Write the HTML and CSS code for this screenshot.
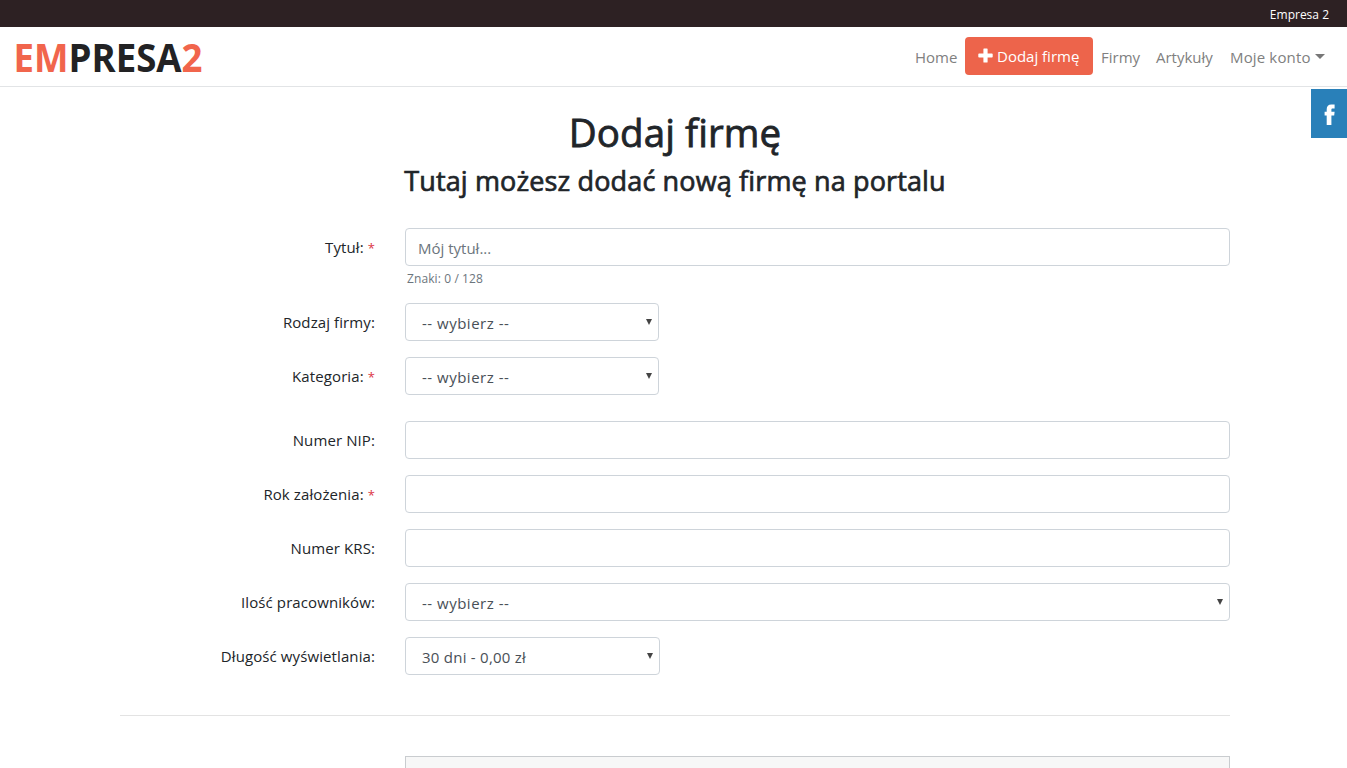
FILE: index.html
```html
<!DOCTYPE html>
<html lang="pl">
<head>
<meta charset="utf-8">
<title>Dodaj firmę - Empresa 2</title>
<link rel="stylesheet" href="styles.css">
</head>
<body>
<div class="topbar"><span class="topbar-name">Empresa 2</span></div>
<header class="navbar">
  <a class="brand" href="#">
    <svg width="210" height="59" viewBox="0 0 210 59">
      <text class="brand-text" x="13.500" y="45" textLength="189" lengthAdjust="spacingAndGlyphs"><tspan class="brand-accent">EM</tspan><tspan class="brand-dark">PRESA</tspan><tspan class="brand-accent">2</tspan></text>
    </svg>
  </a>
  <nav class="nav">
    <a class="nav-link nav-home" href="#">Home</a>
    <a class="btn-add" href="#">
      <svg class="plus" width="15" height="15" viewBox="0 0 15 15"><path d="M6 0.5h3q.6 0 .6.6v4.4h4.3q.8 0 .8.7v2.6q0 .7-.8.7H9.600v4.400q0 .6-.6.6H6q-.6 0-.6-.6V9.500H1.100q-.8 0-.8-.7V6.200q0-.7.8-.7h4.300V1.100q0-.6.6-.6z" fill="#fff"/></svg>
      <span>Dodaj firmę</span>
    </a>
    <a class="nav-link nav-firmy" href="#">Firmy</a>
    <a class="nav-link nav-art" href="#">Artykuły</a>
    <a class="nav-link nav-konto" href="#"><span>Moje konto</span><i class="caret"></i></a>
  </nav>
</header>
<a class="facebook" href="#"><svg width="12" height="22" viewBox="0 0 12 22"><path d="M2.700 21V11.600H.6V7.800h2.100V5.300C2.700 2.200 4.400.5 7.300.5h3.300v3.900H8.800C7.700 4.400 7.400 4.800 7.400 5.800v2h3.200l-.4 3.800H7.400V21z" fill="#fff"/></svg></a>
<main class="container">
  <h1 class="title">Dodaj firmę</h1>
  <h2 class="subtitle">Tutaj możesz dodać nową firmę na portalu</h2>
  <form class="form">
    <div class="row row-title">
      <label class="label">Tytuł: <b class="req">*</b></label>
      <div class="field"><input class="control" placeholder="Mój tytuł..."><small class="hint">Znaki: 0 / 128</small></div>
    </div>
    <div class="row">
      <label class="label">Rodzaj firmy:</label>
      <div class="select w254"><select class="control s-choose"><option>-- wybierz --</option></select></div>
    </div>
    <div class="row row-category">
      <label class="label">Kategoria: <b class="req">*</b></label>
      <div class="select w254"><select class="control s-choose"><option>-- wybierz --</option></select></div>
    </div>
    <div class="row">
      <label class="label">Numer NIP:</label>
      <div class="field"><input class="control"></div>
    </div>
    <div class="row">
      <label class="label">Rok założenia: <b class="req">*</b></label>
      <div class="field"><input class="control"></div>
    </div>
    <div class="row">
      <label class="label">Numer KRS:</label>
      <div class="field"><input class="control"></div>
    </div>
    <div class="row">
      <label class="label">Ilość pracowników:</label>
      <div class="select"><select class="control s-choose"><option>-- wybierz --</option></select></div>
    </div>
    <div class="row">
      <label class="label">Długość wyświetlania:</label>
      <div class="select w255"><select class="control s-days"><option>30 dni - 0,00 zł</option></select></div>
    </div>
    <hr class="divider">
    <div class="editor"></div>
  </form>
</main>
</body>
</html>
```
FILE: styles.css
```css
* { box-sizing: border-box; }
body {
  margin: 0;
  background: #fff;
  color: #212529;
  font: 15px/24px "Open Sans", "Noto Sans", sans-serif;
}
a { text-decoration: none; color: inherit; }
.topbar {
  height: 27px;
  background: #2d2123;
  color: #fff;
  font-size: 12px;
  line-height: 29px;
  text-align: right;
  padding-right: 18px;
}
.navbar {
  height: 60px;
  display: flex;
  align-items: flex-start;
  justify-content: space-between;
  padding-right: 14px;
  border-bottom: 1px solid #e2e4e6;
}
.brand, .brand svg { display: block; }
.brand-text { font: 700 39px "Open Sans", sans-serif; }
.brand-accent { fill: #f1654c; }
.brand-dark { fill: #222224; }
.nav { display: flex; height: 38px; margin-top: 10px; }
.nav-link {
  padding: 8px 8px 0;
  color: #808080;
  white-space: nowrap;
}
.nav-home { width: 58px; }
.nav-firmy { width: 55px; }
.nav-art { width: 74px; }
.nav-konto { display: flex; width: 111px; letter-spacing: 0.15px; }
.caret {
  margin: 9px 0 0 4px;
  border: 5px solid transparent;
  border-top-color: #777;
  border-bottom: 0;
  height: 5px;
}
.btn-add {
  display: flex;
  width: 128px;
  height: 38px;
  padding: 7px 0 0 13px;
  gap: 4px;
  border-radius: 4px;
  background: #ed644b;
  color: #fff;
  white-space: nowrap;
}
.plus { margin-top: 4px; flex: none; }
.facebook {
  position: absolute;
  right: 0;
  top: 89px;
  width: 36px;
  height: 49px;
  padding: 15px 0 0 13px;
  background: #2980b9;
}
.container { width: 1110px; margin: 0 0 0 120px; padding-top: 21px; }
.title {
  margin: 0 0 8px;
  font-size: 38.500px;
  line-height: 48px;
  font-weight: 400;
  -webkit-text-stroke: 0.8px currentColor;
  letter-spacing: 0.1px;
  text-align: center;
}
.subtitle {
  margin: 0;
  font-size: 27px;
  line-height: 34px;
  font-weight: 400;
  -webkit-text-stroke: 0.7px currentColor;
  letter-spacing: 0.14px;
  text-align: center;
}
.form { padding-top: 30px; }
.row {
  display: grid;
  grid-template-columns: 255px 825px;
  column-gap: 30px;
  margin-bottom: 16px;
}
.row-title { height: 59px; }
.row-category { margin-bottom: 26px; }
.label { text-align: right; padding-top: 7px; white-space: nowrap; letter-spacing: 0.1px; }
.req { color: #dc3545; font-weight: 400; font-size: 13px; }
.control {
  display: block;
  width: 100%;
  height: 38px;
  margin: 0;
  padding: 4px 12px 2px;
  border: 1px solid #ced4da;
  border-radius: 4px;
  background: #fff;
  color: #495057;
  font: inherit;
  appearance: none;
}
.control::placeholder { color: #6c757d; opacity: 1; }
.hint { display: block; padding-left: 2px; font-size: 12px; line-height: 25px; color: #6c757d; letter-spacing: 0.1px; }
.select { position: relative; }
.select .control { padding-left: 16px; }
.s-choose { letter-spacing: 0.5px; }
.s-days { letter-spacing: 0.25px; }
.select::after {
  content: "";
  position: absolute;
  right: 7px;
  top: 16px;
  border: 3px solid transparent;
  border-top: 6px solid #444;
  border-bottom: 0;
}
.w254 { width: 254px; }
.w255 { width: 255px; }
.divider { height: 1px; margin: 40px 0; border: 0; background: #e3e3e3; }
.editor { height: 12px; margin-left: 285px; border: 1px solid #c9cccf; border-bottom: 0; background: #f7f7f7; }
```
